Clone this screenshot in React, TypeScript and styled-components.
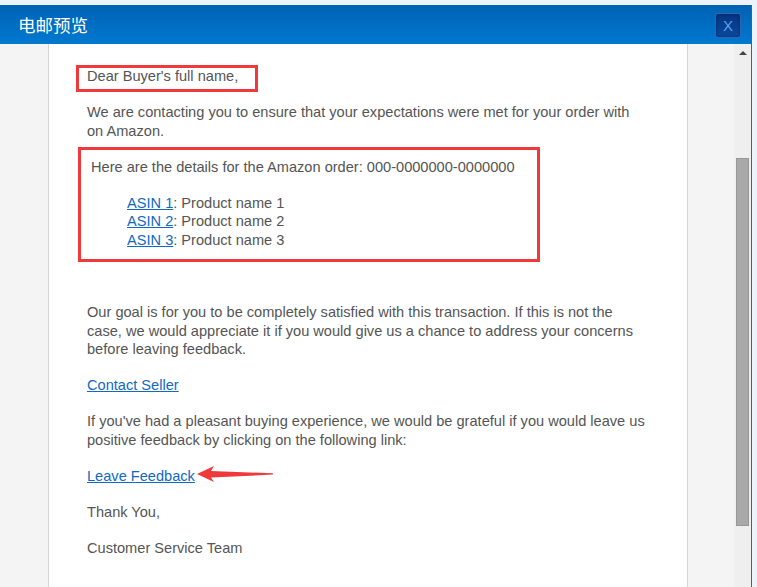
import React from "react";
import styled, { createGlobalStyle } from "styled-components";

const GlobalStyle = createGlobalStyle`
  html, body {
    margin: 0;
    padding: 0;
    background: #eef2f9;
    overflow: hidden;
  }
`;

const Dialog = styled.div`
  margin-top: 5px;
  width: 751px;
  height: 600px;
  border-right: 1px solid #0a70c6;
  display: flex;
  flex-direction: column;
  font-family: "Liberation Sans", Arial, sans-serif;
`;

const Header = styled.div`
  height: 39px;
  flex: none;
  display: flex;
  align-items: center;
  justify-content: space-between;
  padding: 0 10px 0 18px;
  background: linear-gradient(#0062b4, #0079d0);
`;

const Title = styled.span`
  color: #fff;
  font-family: "Noto Sans CJK SC", sans-serif;
  font-size: 17.5px;
`;

const CloseButton = styled.button`
  width: 26px;
  height: 25px;
  margin-top: 2px;
  padding: 0;
  border: 1px solid #2f66ad;
  border-radius: 3px;
  background: linear-gradient(#053482, #0b4a9c);
  box-shadow: inset 0 0 3px rgba(0, 20, 80, 0.6);
  color: #5aa2ea;
  font-family: "Liberation Sans", Arial, sans-serif;
  font-size: 15px;
  line-height: 22px;
  cursor: pointer;
`;

const Body = styled.div`
  flex: 1;
  display: flex;
  min-height: 0;
`;

const Viewport = styled.div`
  flex: 1;
  background: #f4f4f4;
  padding-left: 48px;
`;

const Paper = styled.div`
  position: relative;
  width: 640px;
  height: 100%;
  box-sizing: border-box;
  background: #fff;
  border-left: 1px solid #d6d6d6;
  border-right: 1px solid #d6d6d6;
  padding: 23px 40px 0 38px;
  color: #555;
  font-size: 14.6px;
  line-height: 18.5px;
`;

const Para = styled.p<{ $indent?: number; $gap?: number }>`
  margin: 0 0 ${(p) => p.$gap ?? 17.5}px;
  padding-left: ${(p) => p.$indent ?? 0}px;
`;

const Link = styled.a`
  color: #1069c4;
  text-decoration: underline;
`;

const Mark = styled.div<{ $x: number; $y: number; $w: number; $h: number }>`
  position: absolute;
  left: ${(p) => p.$x}px;
  top: ${(p) => p.$y}px;
  width: ${(p) => p.$w}px;
  height: ${(p) => p.$h}px;
  box-sizing: border-box;
  border: 3px solid #f0393b;
  pointer-events: none;
`;

const Arrow = styled.svg`
  position: absolute;
  left: 147px;
  top: 421px;
`;

const Scrollbar = styled.div`
  width: 17px;
  flex: none;
  background: #efefef;
  display: flex;
  flex-direction: column;
  align-items: center;
`;

const ArrowButton = styled.div<{ $down?: boolean }>`
  height: 17px;
  width: 17px;
  display: flex;
  align-items: center;
  justify-content: center;
  &::before {
    content: "";
    border-left: 4px solid transparent;
    border-right: 4px solid transparent;
    ${(p) => (p.$down ? "border-top" : "border-bottom")}: 4px solid #444;
  }
`;

const Thumb = styled.div`
  width: 11px;
  height: 366px;
  margin: 97px 1px 0 0;
  background: #a9a9a9;
  border: 1px solid #979797;
`;

const Track = styled.div`
  flex: 1;
`;

const products = ["Product name 1", "Product name 2", "Product name 3"];

export default function App() {
  return (
    <>
      <GlobalStyle />
      <Dialog>
        <Header>
          <Title>电邮预览</Title>
          <CloseButton>X</CloseButton>
        </Header>
        <Body>
          <Viewport>
            <Paper>
              <Para>Dear Buyer's full name,</Para>
              <Para>
                We are contacting you to ensure that your expectations were met for your order with on Amazon.
              </Para>
              <Para $indent={4}>Here are the details for the Amazon order: 000-0000000-0000000</Para>
              <Para $indent={40} $gap={54}>
                {products.map((name, idx) => (
                  <React.Fragment key={idx}>
                    <Link href="#">ASIN {idx + 1}</Link>: {name}
                    <br />
                  </React.Fragment>
                ))}
              </Para>
              <Para>
                Our goal is for you to be completely satisfied with this transaction. If this is not the case, we
                would appreciate it if you would give us a chance to address your concerns before leaving feedback.
              </Para>
              <Para>
                <Link href="#">Contact Seller</Link>
              </Para>
              <Para>
                If you've had a pleasant buying experience, we would be grateful if you would leave us positive
                feedback by clicking on the following link:
              </Para>
              <Para>
                <Link href="#">Leave Feedback</Link>
              </Para>
              <Para>Thank You,</Para>
              <Para>Customer Service Team</Para>

              <Mark $x={27} $y={21} $w={182} $h={27} />
              <Mark $x={29} $y={103} $w={462} $h={115} />
              <Arrow width="78" height="18" viewBox="0 0 78 18">
                <polygon points="1,9 18,1 15,6 77,8.3 77,9.6 15,12.6 18,17" fill="#f0393b" />
              </Arrow>
            </Paper>
          </Viewport>
          <Scrollbar>
            <ArrowButton />
            <Thumb />
            <Track />
            <ArrowButton $down />
          </Scrollbar>
        </Body>
      </Dialog>
    </>
  );
}
